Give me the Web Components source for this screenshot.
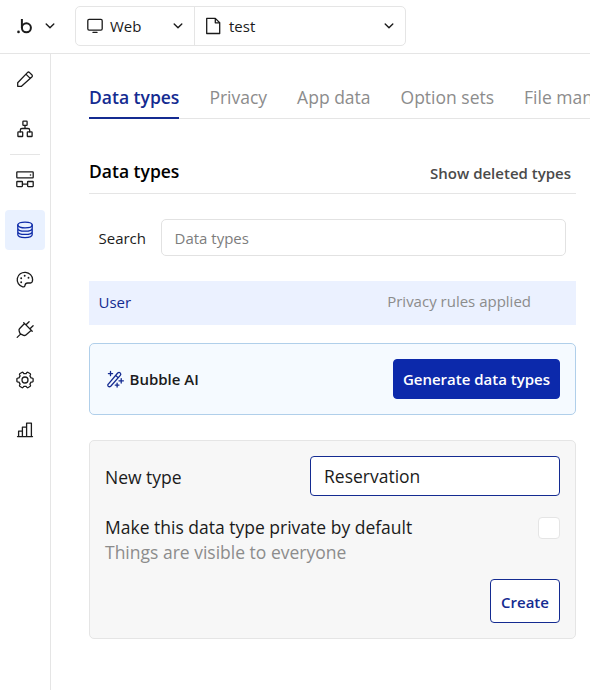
<!DOCTYPE html>
<html lang="en">
<head>
<meta charset="UTF-8">
<title>Data types</title>
<style>
  html, body {
    margin: 0;
    height: 100%;
    overflow: hidden;
    background: #fff;
    font-family: "Open Sans", "Noto Sans", sans-serif;
    color: #1b1b1b;
  }
</style>
</head>
<body>
<app-shell>
  <top-bar slot="header">
    <select-box icon="monitor" style="width: 119px">Web</select-box>
    <select-box icon="file" style="width: 210px">test</select-box>
  </top-bar>
  <side-nav slot="nav"></side-nav>

  <tab-bar>
    <tab-item active>Data types</tab-item>
    <tab-item>Privacy</tab-item>
    <tab-item>App data</tab-item>
    <tab-item>Option sets</tab-item>
    <tab-item>File manager</tab-item>
  </tab-bar>
  <section-header>Data types<span slot="action">Show deleted types</span></section-header>
  <search-field label="Search" placeholder="Data types"></search-field>
  <type-row>User<span slot="note">Privacy rules applied</span></type-row>
  <ai-card>Bubble AI<ui-button primary slot="action">Generate data types</ui-button></ai-card>
  <new-type-form value="Reservation"></new-type-form>
</app-shell>

<script>
const ICONS = {
  chevron: '<path d="M6.2 8l3.8 3.8L13.800 8" stroke-width="1.4"/>',
  monitor: '<rect x="2.8" y="3.4" width="14.4" height="10.7" rx="1.3"/><path d="M8 16.4h4"/>',
  file: '<path d="M2.700 2.400h8.600l4.400 4.400v10.700H2.700z"/><path d="M11.300 2.600v4.200h4.200"/>',
  pencil: '<path d="M2.700 17.300v-3.500L12.400 3.600q1.100-1.100 2.200 0l2.200 2.200q1.100 1.100 0 2.200L6.500 17.300zM10.900 5.100l4.300 4.300"/>',
  sitemap: '<rect x="7.900" y="2.100" width="4.200" height="4.200" rx=".6"/><rect x="2.900" y="12.900" width="4.800" height="4.600" rx=".6"/><rect x="12.300" y="12.900" width="4.800" height="4.600" rx=".6"/><path d="M10 6.300v3.200M5.300 12.900v-1.700q0-1.700 1.700-1.700h6q1.700 0 1.700 1.700v1.700"/>',
  server: '<rect x="1.800" y="1.900" width="16.400" height="5.900" rx=".6"/><rect x="1.800" y="11.500" width="5.600" height="5.100" rx=".5"/><rect x="12.600" y="11.500" width="5.600" height="5.100" rx=".5"/><path d="M7.400 14.100h5.200"/><circle cx="15.500" cy="5" r=".8" fill="currentColor" stroke="none"/>',
  database: '<ellipse cx="10" cy="5" rx="7.200" ry="2.900"/><path d="M2.800 5v9.600c0 1.700 3.200 3 7.200 3s7.200-1.300 7.200-3V5M2.800 8.200c0 1.700 3.200 3 7.200 3s7.200-1.300 7.200-3M2.800 11.400c0 1.700 3.200 3 7.200 3s7.200-1.300 7.200-3"/>',
  palette: '<path d="M17.600 9.600A7.700 7.400 0 1 0 7.700 16.800c1.300.4 2-.3 2.200-1.200.3-1.900 1.300-2.600 2.700-2.600h2.800c1.600 0 2.200-1.500 2.200-3.400z"/><g fill="currentColor" stroke="none"><circle cx="9.700" cy="5.800" r=".95"/><circle cx="13.500" cy="7.800" r=".95"/><circle cx="6.200" cy="8.200" r=".95"/><circle cx="6.200" cy="12.200" r=".95"/></g>',
  plug: '<path d="M2.200 17.400l3.300-3.300M8.700 2.600l8.500 8.700M11 4.800l3.100-3.100M15 8.800l3.100-3.100M9.500 3.500L4.700 8.500q-1 1-.6 2.200l.6 2.100q.3 1 1.200 1.300l2.700 1.300q1.300.4 2.300-.5l5.400-4.700"/>',
  gear: '<path d="M8.900 3.700h2.200Q11.900 2 12.800 2.300L15.300 3.700Q16 4.300 14.900 5.900L16 7.800Q18 7.900 18.100 8.700V11.300Q18 12.100 16 12.200L14.900 14.100Q16 15.700 15.300 16.300L12.800 17.700Q11.900 18 11.100 16.300H8.900Q8.100 18 7.200 17.700L4.700 16.300Q4 15.700 5.100 14.100L4 12.200Q2 12.100 1.900 11.300V8.700Q2 7.900 4 7.800L5.100 5.900Q4 4.300 4.700 3.700L7.200 2.300Q8.100 2 8.900 3.700z"/><circle cx="10" cy="10" r="3"/>',
  chart: '<path d="M2.500 16.600h15M3.600 16.600v-5.400h3.800v5.400M7.400 16.300V7.200h4.200v9.400M11.600 7.200V3.200h4.800v13.400"/>',
  wand: '<path d="M3.100 15.300L12.700 4q1.300-1.200 2.500-.1 1.200 1.200.1 2.500L5.700 17.300q-1.300 1-2.500-.1-.9-1-.1-1.900zM10.700 6.400l2.400 2.300M5.500 2.500v4.200M3.400 4.600h4.200M16.200 9.600v4.400M14 11.800h4.400M12.100 14.200v3.800M10.200 16.100H14"/>'
};

function icon(name, size = 20) {
  return `<svg width="${size}" height="${size}" viewBox="0 0 20 20" fill="none" stroke="currentColor" stroke-width="1.3" stroke-linecap="round" stroke-linejoin="round">${ICONS[name]}</svg>`;
}

// Registers an element whose shadow root is filled once from render()
function define(tag, render) {
  customElements.define(tag, class extends HTMLElement {
    connectedCallback() {
      if (this.shadowRoot) return;
      this.attachShadow({ mode: 'open' });
      this.shadowRoot.innerHTML = render(this);
    }
  });
}

define('app-shell', () => `
  <style>
    :host {
      display: grid;
      grid-template: 54px 1fr / 51px 1fr;
      height: 100%;
    }
    slot[name="header"] { display: block; grid-column: 1 / 3; }
    main { min-width: 0; padding: 21px 0 0 38px; overflow: hidden; }
  </style>
  <slot name="header"></slot>
  <slot name="nav"></slot>
  <main><slot></slot></main>
`);

define('top-bar', () => `
  <style>
    :host {
      display: flex;
      box-sizing: border-box;
      height: 54px;
      padding: 6px 0 0 15px;
      border-bottom: 1px solid #e5e5e5;
    }
    .brand { display: flex; align-items: center; gap: 5px; width: 60px; height: 40px; }
    svg { display: block; }
    .selects { display: flex; box-sizing: border-box; height: 40px; border: 1px solid #e5e5e5; border-radius: 5px; }
  </style>
  <div class="brand">
    <svg width="20" height="20" viewBox="0 0 20 20" fill="none" stroke="#1b1b1b" stroke-width="2">
      <circle cx="11.400" cy="11.800" r="4.500"/>
      <path d="M6.900 3v8.800"/>
      <circle cx="3.500" cy="15.900" r="1.300" fill="#1b1b1b" stroke="none"/>
    </svg>
    ${icon('chevron')}
  </div>
  <div class="selects"><slot></slot></div>
`);

define('select-box', el => `
  <style>
    :host {
      display: flex;
      align-items: center;
      box-sizing: border-box;
      padding: 0 6px 0 9px;
      font-size: 15px;
    }
    :host(:first-child) { border-right: 1px solid #e5e5e5; }
    svg { display: block; flex: none; }
    span { flex: 1; padding: 0 0 1px 5px; }
  </style>
  ${icon(el.getAttribute('icon'))}<span><slot></slot></span>${icon('chevron')}
`);

define('side-nav', () => `
  <style>
    :host {
      display: flex;
      flex-direction: column;
      align-items: center;
      gap: 10px;
      padding-top: 5px;
      border-right: 1px solid #e5e5e5;
    }
    .item { display: grid; place-items: center; width: 40px; height: 40px; border-radius: 4px; }
    .item.active { background: #e9f1ff; color: #0d2aa8; }
    hr { width: 30px; height: 1px; margin: -5px 0; border: 0; background: #e5e5e5; }
  </style>
  <div class="item">${icon('pencil')}</div>
  <div class="item">${icon('sitemap')}</div>
  <hr>
  <div class="item">${icon('server')}</div>
  <div class="item active">${icon('database')}</div>
  <div class="item">${icon('palette')}</div>
  <div class="item">${icon('plug')}</div>
  <div class="item">${icon('gear')}</div>
  <div class="item">${icon('chart')}</div>
`);

define('tab-bar', () => `
  <style>
    :host {
      display: flex;
      gap: 30px;
      height: 44px;
      box-shadow: inset 0 -1px #e5e5e5;
    }
  </style>
  <slot></slot>
`);

define('tab-item', () => `
  <style>
    :host {
      flex: none;
      box-sizing: border-box;
      height: 44px;
      font-size: 17.5px;
      line-height: 45px;
      white-space: nowrap;
      color: #8c8c8c;
    }
    :host([active]) { color: #142b91; font-weight: 600; border-bottom: 2px solid #142b91; }
  </style>
  <slot></slot>
`);

define('section-header', () => `
  <style>
    :host {
      display: flex;
      justify-content: space-between;
      box-sizing: border-box;
      height: 45px;
      margin: 30px 14px 0 0;
      padding-right: 5px;
      border-bottom: 1px solid #e5e5e5;
      font-size: 17.5px;
      font-weight: 600;
      line-height: 45px;
      color: #000;
    }
    .action { font-size: 15px; line-height: 49px; color: #4a4a4a; }
  </style>
  <div><slot></slot></div>
  <div class="action"><slot name="action"></slot></div>
`);

define('search-field', el => `
  <style>
    :host {
      display: flex;
      align-items: center;
      justify-content: space-between;
      margin: 25px 24px 25px 9.5px;
      font-size: 15px;
    }
    input {
      box-sizing: border-box;
      width: 405px;
      height: 37px;
      margin: 0;
      padding: 0 13px 0 12.5px;
      border: 1px solid #e2e2e2;
      border-radius: 5px;
      font: inherit;
      outline: none;
    }
    input::placeholder { color: #7d7d7d; }
    label { padding-top: 1px; }
  </style>
  <label>${el.getAttribute('label')}</label>
  <input placeholder="${el.getAttribute('placeholder')}">
`);

define('type-row', () => `
  <style>
    :host {
      display: flex;
      justify-content: space-between;
      height: 44px;
      margin-right: 14px;
      padding: 0 45px 0 9.5px;
      box-sizing: border-box;
      background: #ebf1ff;
      font-size: 15px;
      line-height: 43px;
      color: #142b91;
    }
    .note { line-height: 41px; color: #8c8c8c; }
  </style>
  <div><slot></slot></div>
  <div class="note"><slot name="note"></slot></div>
`);

define('ui-button', () => `
  <style>
    :host { display: block; }
    button {
      box-sizing: border-box;
      width: 70px;
      height: 44px;
      padding: 2px 0 0;
      border: 1px solid #142b91;
      border-radius: 4px;
      background: #fff;
      font: 600 15px "Open Sans", "Noto Sans", sans-serif;
      white-space: nowrap;
      color: #142b91;
    }
    :host([primary]) button {
      width: 167px;
      height: 40px;
      padding: 0;
      border-color: #0c29ab;
      background: #0c29ab;
      color: #fff;
    }
  </style>
  <button><slot></slot></button>
`);

define('ai-card', () => `
  <style>
    :host {
      display: flex;
      align-items: center;
      gap: 4.5px;
      box-sizing: border-box;
      height: 72px;
      margin: 18px 14px 0 0;
      padding: 0 15px;
      border: 1px solid #b0cfea;
      border-radius: 5px;
      background: #f5faff;
      font-size: 15px;
      font-weight: 600;
    }
    svg { display: block; color: #142b91; }
    div { flex: 1; }
  </style>
  ${icon('wand')}
  <div><slot></slot></div>
  <slot name="action"></slot>
`);

define('new-type-form', el => `
  <style>
    :host {
      display: block;
      box-sizing: border-box;
      height: 199px;
      margin: 25px 14px 0 0;
      padding: 15px;
      border: 1px solid #e5e5e5;
      border-radius: 5px;
      background: #f7f7f7;
      font-size: 17.5px;
      line-height: 25px;
    }
    .row { display: flex; justify-content: space-between; }
    .name { align-items: center; margin-bottom: 19px; }
    .name label { padding-top: 2px; }
    input { box-sizing: border-box; margin: 0; border-radius: 4px; background: #fff; }
    input[type="text"] {
      width: 250px;
      height: 40px;
      padding: 0 13px;
      border: 1px solid #142b91;
      font: inherit;
      color: inherit;
      outline: none;
    }
    input[type="checkbox"] { appearance: none; width: 22px; height: 22px; margin-top: 2px; border: 1px solid #e5e5e5; }
    .hint { color: #8c8c8c; }
    .actions { display: flex; justify-content: flex-end; margin-top: 14px; }
  </style>
  <div class="row name"><label>New type</label><input type="text" value="${el.getAttribute('value')}"></div>
  <div class="row">
    <div>
      <div>Make this data type private by default</div>
      <div class="hint">Things are visible to everyone</div>
    </div>
    <input type="checkbox">
  </div>
  <div class="actions"><ui-button>Create</ui-button></div>
`);
</script>
</body>
</html>
